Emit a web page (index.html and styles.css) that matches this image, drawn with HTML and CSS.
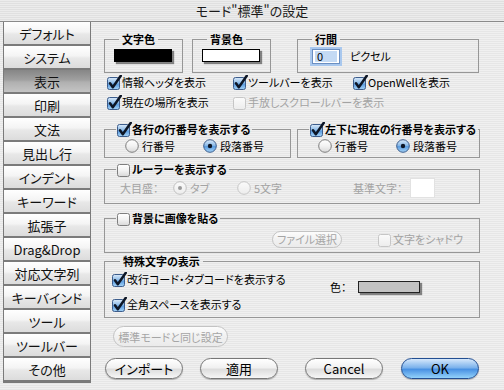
FILE: index.html
```html
<!DOCTYPE html>
<html lang="ja">
<head>
    <meta charset="UTF-8">
    <meta name="viewport" content="width=device-width, initial-scale=1.0">
    <title>モード"標準"の設定</title>
    <link rel="stylesheet" href="styles.css">
</head>
<body>
<div class="window">
    <div class="titlebar">モード"標準"の設定</div>

    <div class="main">
        <!-- category list -->
        <ul class="tabs">
            <li class="tab">デフォルト</li>
            <li class="tab">システム</li>
            <li class="tab selected">表示</li>
            <li class="tab">印刷</li>
            <li class="tab">文法</li>
            <li class="tab">見出し行</li>
            <li class="tab">インデント</li>
            <li class="tab">キーワード</li>
            <li class="tab">拡張子</li>
            <li class="tab">Drag&amp;Drop</li>
            <li class="tab">対応文字列</li>
            <li class="tab">キーバインド</li>
            <li class="tab">ツール</li>
            <li class="tab">ツールバー</li>
            <li class="tab">その他</li>
        </ul>

        <div class="content">
            <div class="row-groups">
                <fieldset class="group color-group">
                    <legend>文字色</legend>
                    <span class="swatch black"></span>
                </fieldset>
                <fieldset class="group color-group">
                    <legend>背景色</legend>
                    <span class="swatch white"></span>
                </fieldset>
                <fieldset class="group spacing-group">
                    <legend>行間</legend>
                    <div class="field-row">
                        <span class="field"><span class="field-sel">0</span></span>
                        <span class="unit">ピクセル</span>
                    </div>
                </fieldset>
            </div>

            <div class="check-grid">
                <div class="check"><svg class="cb"><use href="#cb-on"/></svg>情報ヘッダを表示</div>
                <div class="check"><svg class="cb"><use href="#cb-on"/></svg>ツールバーを表示</div>
                <div class="check"><svg class="cb"><use href="#cb-on"/></svg>OpenWellを表示</div>
                <div class="check"><svg class="cb"><use href="#cb-on"/></svg>現在の場所を表示</div>
                <div class="check disabled"><svg class="cb"><use href="#cb-dis"/></svg>手放しスクロールバーを表示</div>
            </div>

            <div class="pair">
                <fieldset class="group check-group line-group">
                    <legend><svg class="cb"><use href="#cb-on"/></svg>各行の行番号を表示する</legend>
                    <div class="radios">
                        <div class="radio"><svg class="rd"><use href="#rd-off"/></svg>行番号</div>
                        <div class="radio"><svg class="rd"><use href="#rd-on"/></svg>段落番号</div>
                    </div>
                </fieldset>
                <fieldset class="group check-group status-group">
                    <legend><svg class="cb"><use href="#cb-on"/></svg>左下に現在の行番号を表示する</legend>
                    <div class="radios">
                        <div class="radio"><svg class="rd"><use href="#rd-off"/></svg>行番号</div>
                        <div class="radio"><svg class="rd"><use href="#rd-on"/></svg>段落番号</div>
                    </div>
                </fieldset>
            </div>

            <fieldset class="group check-group ruler-group">
                <legend><svg class="cb"><use href="#cb-off"/></svg>ルーラーを表示する</legend>
                <div class="ruler-row">
                    <span class="major-label">大目盛：</span>
                    <div class="radio tab-radio"><svg class="rd"><use href="#rd-dis-on"/></svg>タブ</div>
                    <div class="radio five-radio"><svg class="rd"><use href="#rd-dis"/></svg>5文字</div>
                    <span class="base-label">基準文字：</span>
                    <span class="char-box"></span>
                </div>
            </fieldset>

            <fieldset class="group check-group image-group">
                <legend><svg class="cb"><use href="#cb-off"/></svg>背景に画像を貼る</legend>
                <div class="image-row">
                    <span class="btn small disabled">ファイル選択</span>
                    <div class="check disabled shadow-check"><svg class="cb"><use href="#cb-dis"/></svg>文字をシャドウ</div>
                </div>
            </fieldset>

            <fieldset class="group special-group">
                <legend>特殊文字の表示</legend>
                <div class="special-row">
                    <div class="special-checks">
                        <div class="check"><svg class="cb"><use href="#cb-on"/></svg>改行コード・タブコードを表示する</div>
                        <div class="check"><svg class="cb"><use href="#cb-on"/></svg>全角スペースを表示する</div>
                    </div>
                    <div class="special-color">
                        <span class="color-label">色：</span>
                        <span class="swatch gray"></span>
                    </div>
                </div>
            </fieldset>

            <span class="btn disabled same-btn">標準モードと同じ設定</span>

            <div class="actions">
                <span class="btn btn-import">インポート</span>
                <span class="btn btn-apply">適用</span>
                <span class="btn btn-cancel">Cancel</span>
                <span class="btn btn-ok">OK</span>
            </div>
        </div>
    </div>

    <!-- shared control glyphs -->
    <svg class="defs" width="0" height="0" aria-hidden="true">
        <defs>
            <linearGradient id="g-blue" x1="0" y1="0" x2="0" y2="1">
                <stop offset="0" stop-color="#dcebfa"/>
                <stop offset="0.45" stop-color="#8dbbe8"/>
                <stop offset="0.55" stop-color="#5b9ce0"/>
                <stop offset="1" stop-color="#a6d4f7"/>
            </linearGradient>
            <linearGradient id="g-white" x1="0" y1="0" x2="0" y2="1">
                <stop offset="0" stop-color="#ffffff"/>
                <stop offset="0.5" stop-color="#f2f2f2"/>
                <stop offset="1" stop-color="#d8d8d8"/>
            </linearGradient>
            <linearGradient id="g-dis" x1="0" y1="0" x2="0" y2="1">
                <stop offset="0" stop-color="#fbfbfb"/>
                <stop offset="1" stop-color="#ececec"/>
            </linearGradient>
            <symbol id="cb-on" viewBox="0 0 15 15">
                <rect x="0.5" y="2.5" width="12" height="12" rx="2" fill="url(#g-blue)" stroke="#3d5d8c"/>
                <path d="M3 8.3 L5.8 12.2 L13.8 0.8" fill="none" stroke="#0d1626" stroke-width="2.5" stroke-linecap="round" stroke-linejoin="round"/>
            </symbol>
            <symbol id="cb-off" viewBox="0 0 15 15">
                <rect x="0.5" y="2.5" width="12" height="12" rx="2" fill="url(#g-white)" stroke="#7e7e7e"/>
            </symbol>
            <symbol id="cb-dis" viewBox="0 0 15 15">
                <rect x="0.5" y="2.5" width="12" height="12" rx="2" fill="url(#g-dis)" stroke="#c6c6c6"/>
            </symbol>
            <symbol id="rd-off" viewBox="0 0 14 14">
                <circle cx="7" cy="7" r="6.3" fill="url(#g-white)" stroke="#7e7e7e"/>
            </symbol>
            <symbol id="rd-on" viewBox="0 0 14 14">
                <circle cx="7" cy="7" r="6.3" fill="url(#g-blue)" stroke="#3d5d8c"/>
                <circle cx="7" cy="7" r="2.2" fill="#0d1626"/>
            </symbol>
            <symbol id="rd-dis" viewBox="0 0 14 14">
                <circle cx="7" cy="7" r="6.3" fill="url(#g-dis)" stroke="#c6c6c6"/>
            </symbol>
            <symbol id="rd-dis-on" viewBox="0 0 14 14">
                <circle cx="7" cy="7" r="6.3" fill="url(#g-dis)" stroke="#c0c0c0"/>
                <circle cx="7" cy="7" r="2" fill="#9a9a9a"/>
            </symbol>
        </defs>
    </svg>
</div>
</body>
</html>
```

FILE: styles.css
```css
/* Aqua style preference dialog */
* {
    box-sizing: border-box;
}

body {
    margin: 0;
    font-family: "Noto Sans CJK JP", "Noto Sans", sans-serif;
    font-size: 11px;
    color: #000;
    font-feature-settings: "palt";
}

.window {
    width: 504px;
    height: 390px;
    overflow: hidden;
    background: repeating-linear-gradient(#f0f0f0 0 1px, #e6e6e6 1px 2px);
}

.titlebar {
    height: 22px;
    line-height: 21px;
    text-align: center;
    font-size: 13px;
    color: #1a1a1a;
    border-bottom: 1px solid #8a8a8a;
    background: repeating-linear-gradient(#ececec 0 1px, #e0e0e0 1px 2px);
}

.main {
    display: flex;
    height: 368px;
}

/* category list */
.tabs {
    list-style: none;
    margin: 0 0 0 3px;
    padding: 0;
    width: 88px;
    height: 361px;
    border: 1px solid #7a7a7a;
    border-top: 0;
    display: flex;
    flex-direction: column;
}

.tab {
    height: 24px;
    flex: none;
    border-bottom: 2px solid #7b7b7b;
    display: flex;
    align-items: center;
    justify-content: center;
    font-size: 13px;
    color: #111;
    background: linear-gradient(#ffffff, #f4f4f4 45%, #e8e8e8 55%, #dcdcdc);
}

.tab.selected {
    background: linear-gradient(#868686, #a0a0a0 45%, #b0b0b0 55%, #c4c4c4);
}

.content {
    margin-left: 13px;
    padding-top: 10px;
    width: 376px;
}

/* group boxes */
.group {
    margin: 0;
    min-width: 0;
    border: 1px solid #979797;
}

.group legend {
    margin-left: 5px;
    padding: 0 3px;
    height: 14px;
    line-height: 14px;
    font-weight: bold;
}

.row-groups {
    display: flex;
}

.color-group {
    width: 79px;
    padding: 3px 0 9px 9px;
}

.color-group + .color-group {
    margin-left: 9px;
}

.spacing-group {
    width: 182px;
    margin-left: 26px;
    padding: 2px 0 8px 14px;
}

.spacing-group legend {
    margin-left: 0;
}

.swatch {
    display: block;
    width: 58px;
    height: 13px;
    border: 1px solid #000;
    box-shadow: 2px 2px 1px rgba(0, 0, 0, 0.45);
}

.swatch.black { background: #000; }
.swatch.white { background: #fff; }

.swatch.gray {
    width: 62px;
    height: 12px;
    background: #c3c3c3;
    border-color: #222;
}

.field-row {
    display: flex;
    align-items: center;
}

.field {
    width: 28px;
    height: 15px;
    padding: 1px 2px;
    border: 1px solid #6b8fc2;
    box-shadow: 0 0 0 2px #a9c8ee;
    background: #fff;
}

.field-sel {
    display: block;
    height: 11px;
    line-height: 11px;
    padding-left: 2px;
    background: #c4daf4;
}

.unit {
    margin-left: 10px;
}

/* checkboxes and radios */
.check {
    display: flex;
    align-items: center;
    height: 18px;
    white-space: nowrap;
}

.disabled {
    color: #a3a3a3;
}

.cb {
    width: 15px;
    height: 15px;
    flex: none;
}

.rd {
    width: 14px;
    height: 14px;
    flex: none;
    margin-right: 3px;
}

.check-grid {
    display: grid;
    grid-template-columns: 126px 120px auto;
    row-gap: 2px;
    padding-left: 3px;
}

.check-group {
    padding: 1px 0 3px 11px;
}

.check-group legend {
    margin-left: 0;
    padding: 0 2px 0 1px;
    height: 16px;
    display: flex;
    align-items: center;
}

.pair {
    display: flex;
    gap: 6px;
    margin-top: 10px;
}

.line-group { width: 187px; }
.status-group { width: 183px; }

.radios {
    display: grid;
    grid-template-columns: 78px auto;
    margin-left: 9px;
    height: 16px;
}

.radio {
    display: flex;
    align-items: center;
    white-space: nowrap;
}

.ruler-group {
    margin-top: 3px;
    padding-bottom: 5px;
}

.ruler-row {
    display: flex;
    align-items: center;
    height: 20px;
    margin-left: 4px;
    color: #a3a3a3;
}

.major-label { width: 53px; }
.tab-radio { width: 64px; }
.five-radio { width: 116px; }
.base-label { width: 57px; }

.char-box {
    width: 25px;
    height: 20px;
    background: #fff;
    border: 1px solid #e2e2e2;
}

.image-group {
    margin-top: 6px;
    padding-top: 3px;
}

.image-row {
    display: flex;
    align-items: center;
    height: 20px;
    padding-left: 156px;
}

.shadow-check {
    margin-left: 36px;
}

.special-group {
    margin-top: 1px;
    padding: 2px 0 4px 7px;
}

.special-group legend {
    margin-left: 8px;
}

.special-row {
    display: flex;
}

.special-checks {
    width: 218px;
    display: flex;
    flex-direction: column;
    gap: 7px;
}

.special-color {
    display: flex;
    align-items: center;
    margin-top: 11px;
    height: 12px;
}

.color-label { width: 28px; }

/* push buttons */
.btn {
    display: flex;
    align-items: center;
    justify-content: center;
    width: 78px;
    height: 21px;
    border-radius: 11px;
    border: 1px solid #777;
    font-size: 13px;
    white-space: nowrap;
    background: linear-gradient(#ffffff, #f1f1f1 45%, #dddddd 55%, #f6f6f6);
    box-shadow: 0 1px 1px rgba(0, 0, 0, 0.25);
}

.btn.disabled {
    border-color: #c3c3c3;
    color: #a5a5a5;
    font-size: 11px;
    background: linear-gradient(#fcfcfc, #f1f1f1 50%, #ebebeb);
    box-shadow: none;
}

.btn.small {
    width: 70px;
    height: 17px;
}

.same-btn {
    width: 115px;
    margin: 8px 0 0 9px;
}

.actions {
    display: flex;
    margin-top: 11px;
}

.btn-import { margin-left: 1px; }
.btn-apply { margin-left: 17px; }
.btn-cancel { margin-left: 27px; }

.btn-ok {
    margin-left: 18px;
    border-color: #234f92;
    background: linear-gradient(#d6e8fb, #7db3ec 45%, #4a92e3 55%, #93d2fa);
}

.defs {
    display: block;
    width: 0;
    height: 0;
}
```
